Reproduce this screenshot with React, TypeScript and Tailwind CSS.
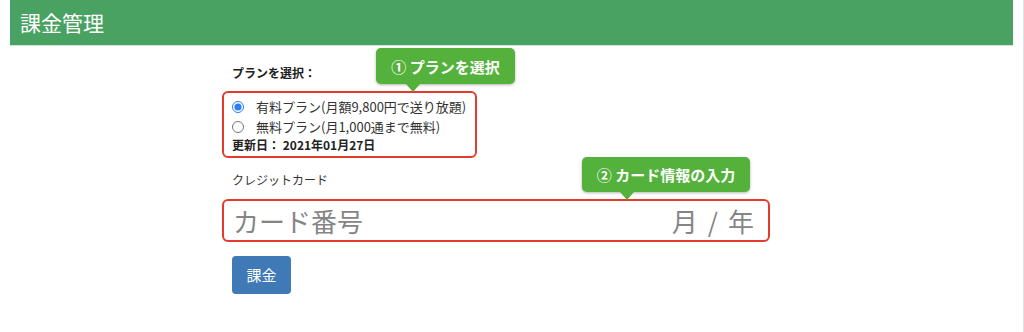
import React from "react";

const jp = { fontFamily: '"Noto Sans CJK JP", "Liberation Sans", sans-serif' };

function Callout({ label, className }: { label: string; className: string }) {
  return (
    <div className={"absolute " + className}>
      <div className="relative flex h-full items-center justify-center rounded-[5px] bg-[#54b13c] text-[15px] font-bold leading-none text-white shadow-[0_1px_3px_rgba(0,0,0,0.3)]">
        {label}
        <span className="absolute left-[30px] top-full h-0 w-0 border-x-[7px] border-t-[8px] border-x-transparent border-t-[#54b13c]" />
      </div>
    </div>
  );
}

export default function App() {
  return (
    <div
      className="min-h-[332px] w-[1024px] border-r border-[#e2e2e2] bg-white"
      style={jp}
    >
      <header className="mx-[10px] flex h-[46px] items-center border-b border-[#cfe5d6] bg-[#4aa262] px-[10px]">
        <h1 className="text-[21px] leading-none text-white">課金管理</h1>
      </header>

      <div className="relative ml-[222px] w-[548px] pb-[37px]">
        <p className="pl-[10px] pt-[19px] text-[12px] font-bold leading-[16px] text-[#222]">
          プランを選択：
        </p>

        <div className="mt-[10px] flex h-[67px] w-[255px] flex-col rounded-[6px] border-2 border-[#e63a2e] pl-[8px] pt-[4px]">
          <label className="flex h-[19px] items-center gap-[12px] text-[13px] text-[#333]">
            <input
              type="radio"
              name="plan"
              defaultChecked
              className="m-0 h-[12px] w-[12px] accent-[#2f7cf6]"
            />
            有料プラン(月額9,800円で送り放題)
          </label>
          <label className="mt-[1px] flex h-[19px] items-center gap-[12px] text-[13px] text-[#333]">
            <input
              type="radio"
              name="plan"
              className="m-0 h-[12px] w-[12px] accent-[#2f7cf6]"
            />
            無料プラン(月1,000通まで無料)
          </label>
          <p className="flex h-[17px] items-center text-[12px] font-bold text-[#222]">
            更新日： 2021年01月27日
          </p>
        </div>

        <p className="pl-[10px] pt-[14px] text-[12px] leading-[16px] text-[#333]">
          クレジットカード
        </p>

        <div className="mt-[11px] flex h-[43px] items-center justify-between rounded-[6px] border-2 border-[#e63a2e] pl-[9px] pr-[14px] text-[26px] leading-none text-[#858585]">
          <span>カード番号</span>
          <span className="flex items-center gap-[10px]">
            <span>月</span>
            <span>/</span>
            <span>年</span>
          </span>
        </div>

        <button className="ml-[10px] mt-[14px] flex h-[38px] w-[59px] items-center justify-center rounded-[4px] bg-[#3f7ab6] text-[15px] text-white">
          課金
        </button>

        <Callout label="① プランを選択" className="left-[154px] top-[2px] h-[36px] w-[139px]" />
        <Callout label="② カード情報の入力" className="left-[360px] top-[111px] h-[35px] w-[168px] [&_span]:left-[38px]" />
      </div>
    </div>
  );
}
